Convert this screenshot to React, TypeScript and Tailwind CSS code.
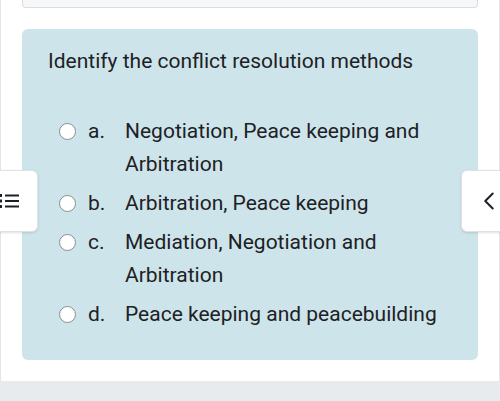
import { ChevronLeft } from 'lucide-react';

const options = [
  { letter: 'a.', text: 'Negotiation, Peace keeping and Arbitration' },
  { letter: 'b.', text: 'Arbitration, Peace keeping' },
  { letter: 'c.', text: 'Mediation, Negotiation and Arbitration' },
  { letter: 'd.', text: 'Peace keeping and peacebuilding' },
];

function ListIcon() {
  return (
    <svg width="22" height="16" viewBox="0 0 22 16" fill="#1d2125">
      <rect x="0" y="1" width="4" height="3" />
      <rect x="0" y="6.5" width="4" height="3" />
      <rect x="0" y="12" width="4" height="3" />
      <rect x="7" y="1.5" width="14" height="2" />
      <rect x="7" y="7" width="14" height="2" />
      <rect x="7" y="12.5" width="14" height="2" />
    </svg>
  );
}

export default function App() {
  return (
    <div className="h-[401px] bg-[#e7ebee] font-['Roboto',sans-serif] text-[#1d2125] overflow-hidden">
      <div className="relative h-[381px] bg-white border-x border-[#e3e6e9] px-[21px]">
        <div className="h-[8px] bg-[#f6f7f8] border border-t-0 border-[#d9dde1] rounded-b-sm" />

        <div className="mt-[21px] bg-[#cde5ea] rounded-md px-[26px] pt-[17px] pb-[26px]">
          <p className="text-[21px] leading-[30px]">Identify the conflict resolution methods</p>
          <div className="mt-[36px] flex flex-col">
            {options.map((o) => (
              <div key={o.letter} className="flex items-start py-[3px]">
                <div className="h-[33px] flex items-center pl-[11px] pr-[12px]">
                  <span className="w-[17px] h-[17px] rounded-full bg-white border border-[#8a8d90]" />
                </div>
                <span className="w-[37px] shrink-0 text-[21px] leading-[33px]">{o.letter}</span>
                <span className="text-[21px] leading-[33px]">{o.text}</span>
              </div>
            ))}
          </div>
        </div>

        <button className="absolute left-[-20px] top-[170px] w-[57px] h-[62px] bg-white border border-[#dee2e6] rounded-md shadow-sm flex items-center justify-end pr-[17px]">
          <ListIcon />
        </button>
        <button className="absolute left-[460px] top-[170px] w-[60px] h-[62px] bg-white border border-[#dee2e6] rounded-md shadow-sm flex items-center pl-[12px]">
          <ChevronLeft size={30} strokeWidth={1.6} color="#1d2125" />
        </button>
      </div>
    </div>
  );
}
